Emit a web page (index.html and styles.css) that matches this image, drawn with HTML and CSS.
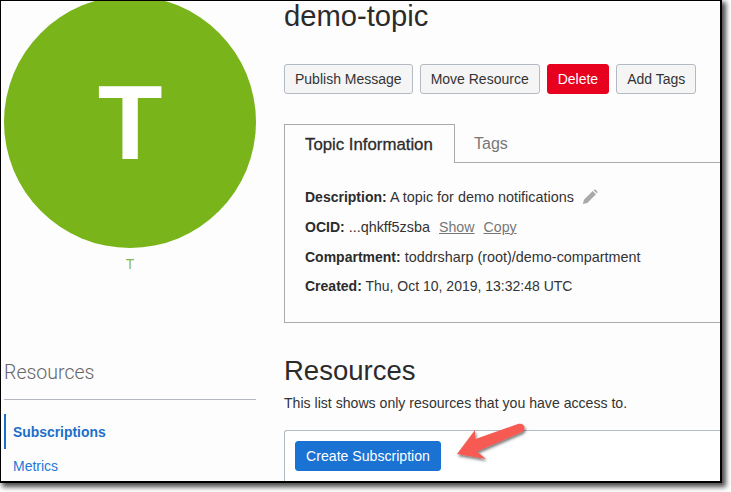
FILE: index.html
```html
<!DOCTYPE html>
<html lang="en">
<head>
<meta charset="utf-8">
<title>demo-topic</title>
<link rel="stylesheet" href="styles.css">
</head>
<body>
<div class="frame">
  <aside class="side">
    <div class="avatar">T</div>
    <div class="avatar-label">T</div>
    <h3 class="side-title">Resources</h3>
    <nav class="side-nav">
      <a class="side-link active">Subscriptions</a>
      <a class="side-link">Metrics</a>
    </nav>
  </aside>
  <main class="main">
    <h1 class="title">demo-topic</h1>
    <div class="actions">
      <button class="btn">Publish Message</button>
      <button class="btn">Move Resource</button>
      <button class="btn danger">Delete</button>
      <button class="btn">Add Tags</button>
    </div>
    <div class="tabs">
      <div class="tab current">Topic Information</div>
      <div class="tab">Tags</div>
    </div>
    <section class="panel">
      <p class="row"><b>Description:</b> A topic for demo notifications
        <svg class="pencil" width="16" height="16" viewBox="0 0 18 18"><path d="M1 17l1.200-5L12 2.300l3.700 3.700L6 15.800z" fill="#a9a9a9"/><path d="M13 1.300l.8-.6c.5-.3 1-.3 1.400.1l2 2c.4.4.4 1 0 1.400l-.6.700z" fill="#a9a9a9"/></svg>
      </p>
      <p class="row"><b>OCID:</b> ...qhkff5zsba <a class="link">Show</a> <a class="link">Copy</a></p>
      <p class="row"><b>Compartment:</b> toddrsharp (root)/demo-compartment</p>
      <p class="row date"><b>Created:</b> Thu, Oct 10, 2019, 13:32:48 UTC</p>
    </section>
    <h2 class="res-title">Resources</h2>
    <p class="res-note">This list shows only resources that you have access to.</p>
    <section class="res-box">
      <button class="btn primary">Create Subscription</button>
    </section>
  </main>
  <svg class="arrow" width="84" height="50" viewBox="0 0 84 50">
    <defs><filter id="sh" x="-20%" y="-20%" width="140%" height="150%"><feDropShadow dx="1" dy="2" stdDeviation="1.500" flood-color="#000" flood-opacity=".55"/></filter></defs>
    <path d="M6 33L24 9l.5 9L67 3C71 2 73.500 4 73.500 7 73.500 9 72.500 10 71 11L26 30.500 35 38z" fill="#f65a52" filter="url(#sh)"/>
  </svg>
</div>
</body>
</html>
```
FILE: styles.css
```css
* { box-sizing: border-box; }
html, body { margin: 0; padding: 0; background: #fff; }
body { min-height: 492px; font-family: "Liberation Sans", Arial, sans-serif; color: #2f2f2f; }
.frame {
  position: relative;
  display: flex;
  width: 722px;
  height: 483px;
  overflow: hidden;
  background: #fdfdfd;
  border: 1px solid #000;
  border-right-width: 2px;
  border-bottom-width: 2px;
  box-shadow: 3px 3px 5px 1px rgba(0, 0, 0, .7);
}
.side { width: 255px; margin-left: 3px; flex: none; }
.avatar {
  width: 252px;
  height: 252px;
  margin-top: -5px;
  border-radius: 50%;
  background: #79b41a;
  color: #fff;
  font-size: 106px;
  font-weight: 700;
  line-height: 252px;
  text-align: center;
}
.avatar-label { margin-top: 8px; width: 252px; text-align: center; font-size: 14px; line-height: 16px; color: #8ab84d; }
.side-title {
  margin: 89px 0 0;
  width: 252px;
  height: 39px;
  border-bottom: 1px solid #b4b8c0;
  font-family: Roboto, "Liberation Sans", sans-serif;
  font-size: 19.500px;
  font-weight: 300;
  line-height: 24px;
  color: #666;
}
.side-nav { display: flex; flex-direction: column; margin-top: 14px; }
.side-link { height: 35px; padding-left: 9px; font-size: 14px; line-height: 35px; color: #1f78d6; }
.side-link.active { border-left: 2px solid #1b6fc9; padding-left: 7px; font-size: 13.900px; line-height: 37px; font-weight: 700; color: #1b6fc9; }
.main { flex: 1; margin-left: 25px; min-width: 0; }
.title { margin: -2px 0 0; font-size: 29.200px; font-weight: 400; line-height: 34px; color: #2b2b2b; }
.actions { display: flex; gap: 7px; margin-top: 31px; }
.btn {
  height: 30px;
  padding: 0 10px;
  border: 1px solid #b4bac4;
  border-radius: 3px;
  background: #f5f5f6;
  font: 14px/28px "Liberation Sans", Arial, sans-serif;
  color: #333;
}
.btn.danger { background: #e8001f; border-color: #e8001f; color: #fff; }
.btn.primary { width: 146px; padding: 0; background: #1a73d3; border-color: #1a73d3; color: #fff; font-size: 14.100px; }
.tabs { display: flex; margin-top: 30px; height: 39px; border-bottom: 1px solid #aaa; }
.tab { padding: 0 19px; font-size: 16px; line-height: 40px; color: #777; }
.tab.current {
  width: 171px;
  height: 39px;
  padding: 0 20px;
  background: #fdfdfd;
  border: 1px solid #aaa;
  border-bottom: none;
  font-size: 16.800px;
  white-space: nowrap;
  color: #2b2b2b;
  -webkit-text-stroke: .3px #2b2b2b;
}
.panel {
  height: 160px;
  padding: 20px 20px 0;
  border-left: 1px solid #aaa;
  border-bottom: 1px solid #aaa;
}
.row { margin: 0; height: 30px; font-size: 14.400px; line-height: 29px; color: #333; white-space: nowrap; }
.row.date { margin-top: -1px; font-size: 14px; }
.row b { font-size: 14px; color: #2b2b2b; }
.pencil { vertical-align: -3px; margin-left: 4px; }
.link { margin-left: 5px; font-size: 14.200px; color: #777; text-decoration: underline; }
.res-title { margin: 31px 0 0; font-size: 27.500px; font-weight: 400; line-height: 34px; color: #2b2b2b; }
.res-note { margin: 6px 0 0; font-size: 14.100px; line-height: 18px; color: #333; }
.res-box {
  margin-top: 18px;
  height: 70px;
  padding: 10px 10px 0;
  background: #fff;
  border: 1px solid #b4bac8;
  border-right: none;
  border-bottom: none;
  border-radius: 3px 0 0 0;
}
.arrow { position: absolute; left: 450px; top: 420px; }
```
